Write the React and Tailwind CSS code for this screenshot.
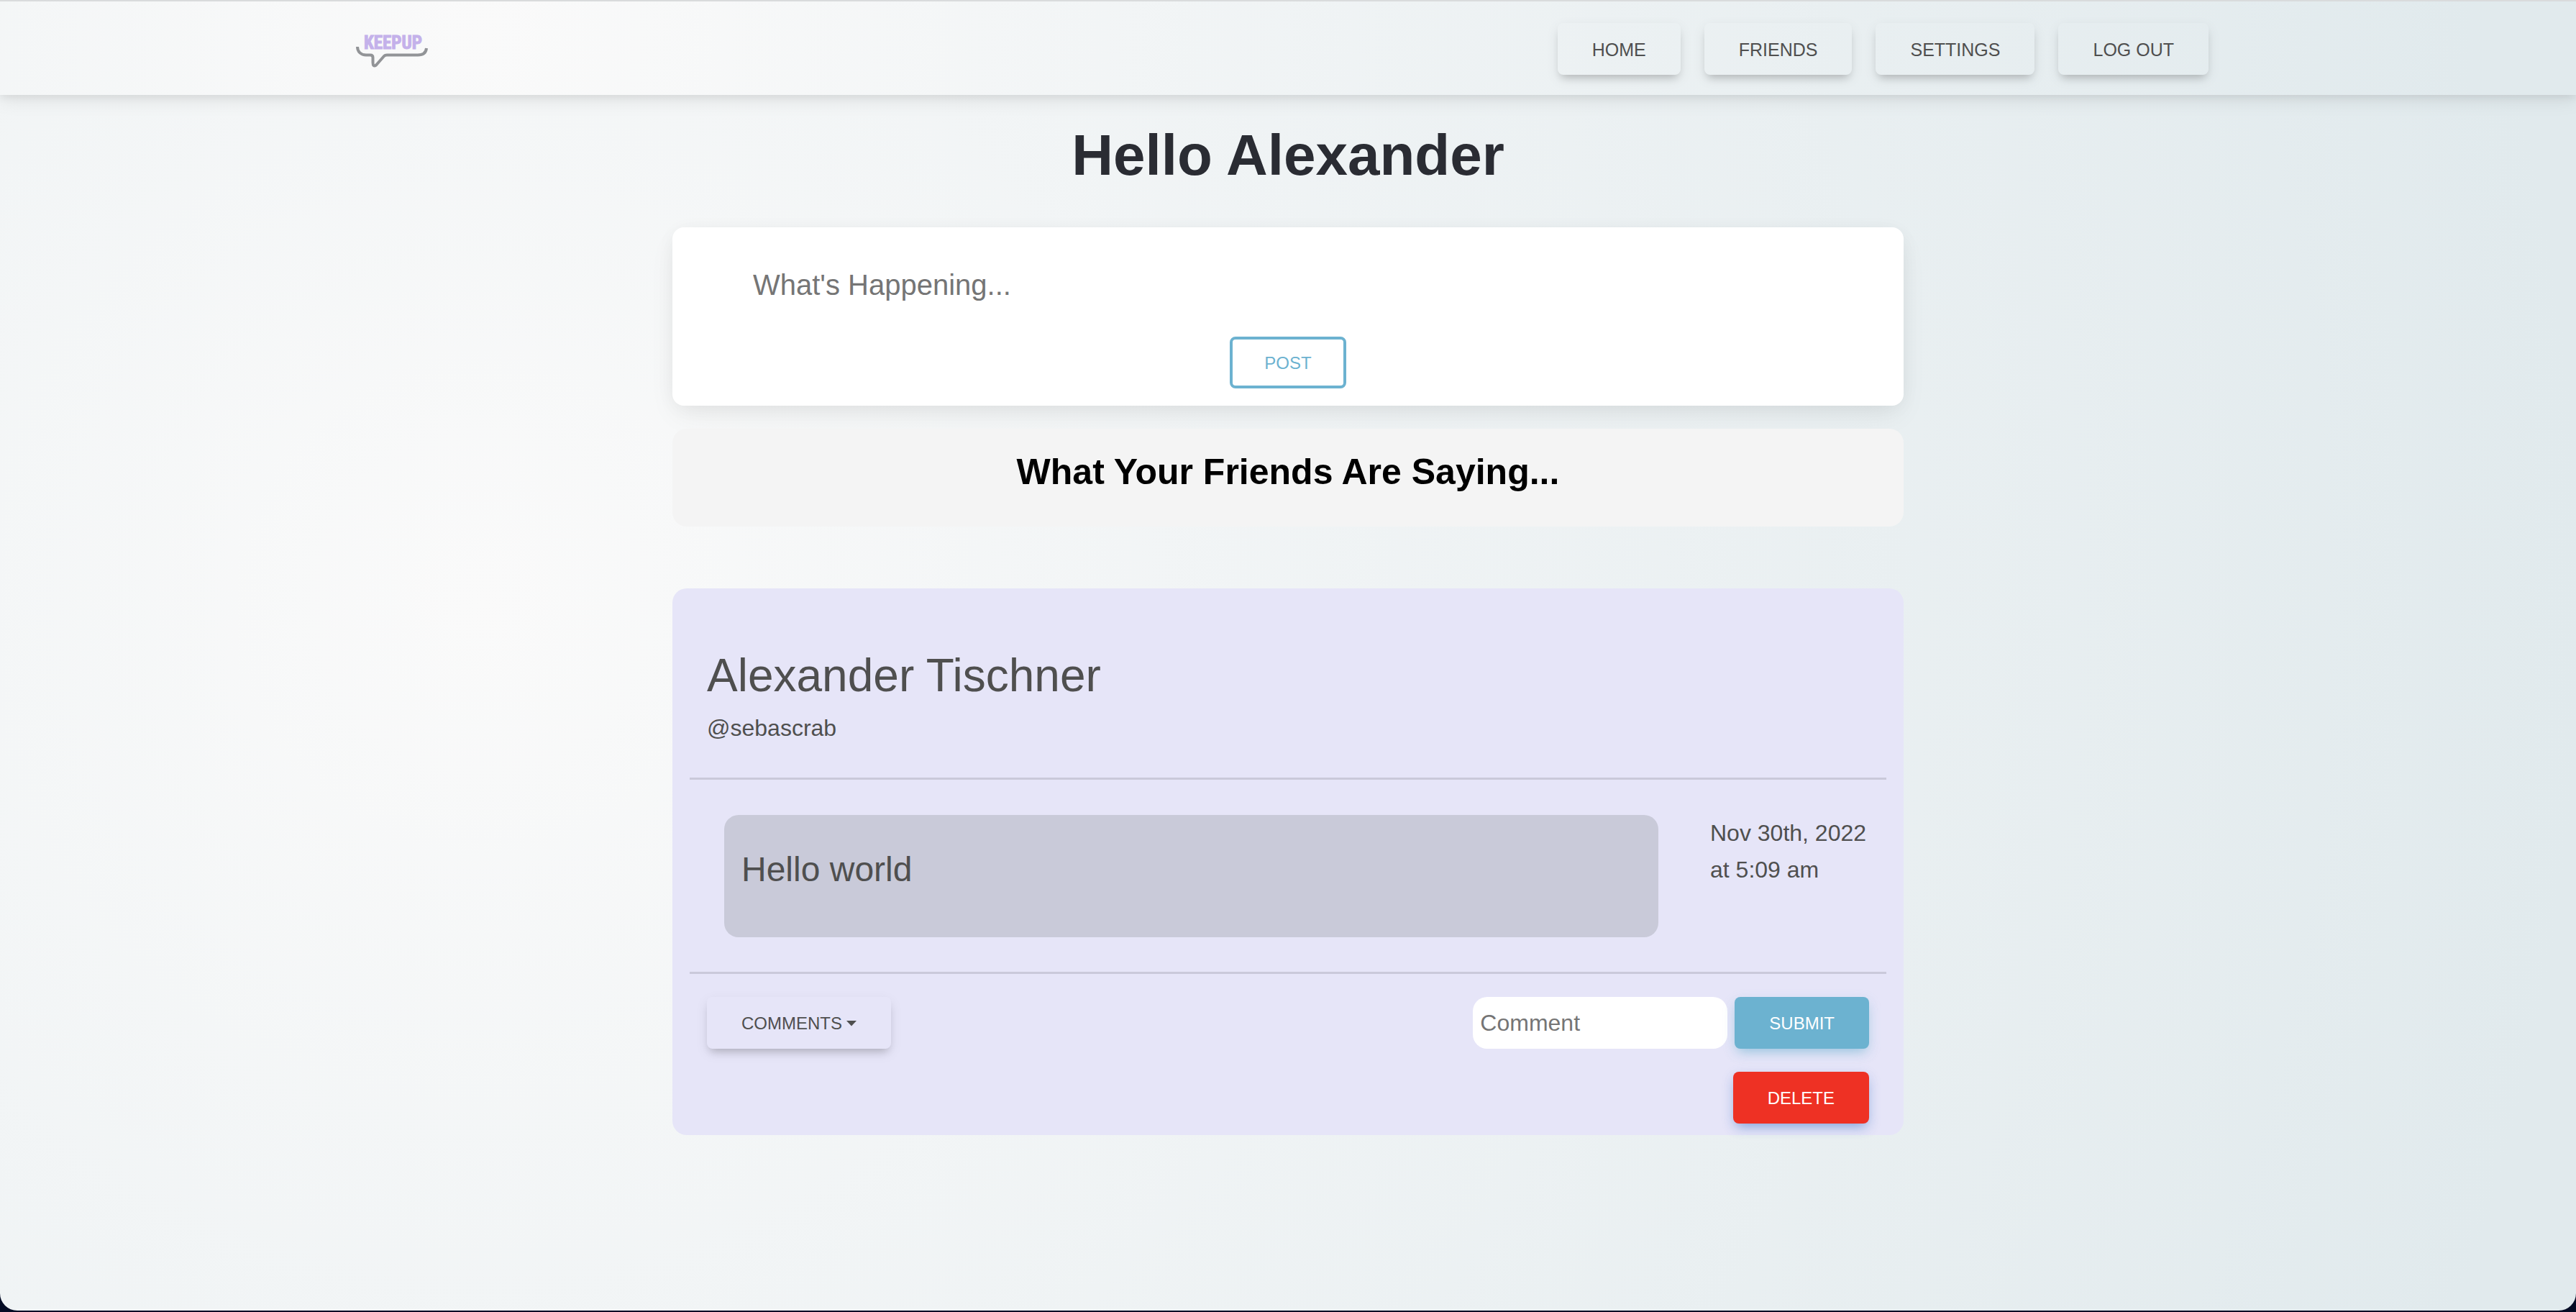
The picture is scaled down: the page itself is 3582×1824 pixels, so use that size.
const BTN =
  "h-[72px] rounded-lg px-12 text-center uppercase leading-none whitespace-nowrap";
const SOFT_SHADOW =
  "shadow-[0_8px_12px_-5px_rgba(0,0,0,0.2),0_6px_18px_rgba(0,0,0,0.08)]";

const links = ["Home", "Friends", "Settings", "Log out"];

function Logo() {
  return (
    <svg width="100" height="52" viewBox="0 0 100 52" role="img" aria-label="KeepUp" className="block">
      <text
        x="51.5"
        y="26"
        textAnchor="middle"
        fontSize="25"
        fontWeight="700"
        fill="#c4b1ea"
        stroke="#c4b1ea"
        strokeWidth="1"
        className="font-['Liberation_Sans_Narrow','Roboto_Condensed','Liberation_Sans',sans-serif]"
      >
        KEEPUP
      </text>
      <path
        d="M2 23 C2 30 7 34.500 14 34.500 H20 Q23.500 34.500 23.500 38 V45 Q23.500 51.500 28 48.500 L39 36 Q40.500 34.500 43 34.500 H86 Q97 34.500 98 25"
        fill="none"
        stroke="#929497"
        strokeWidth="4"
      />
    </svg>
  );
}

function Navbar() {
  return (
    <header className="border-t-2 border-[#d9dbdc] bg-[radial-gradient(circle_at_18.7%_38%,rgb(250,250,250)_0%,rgb(225,234,237)_95%)] pt-[30px] pb-7 shadow-[0_8px_24px_rgba(0,0,0,0.08),0_4px_10px_rgba(0,0,0,0.06)]">
      <div className="mx-auto flex max-w-[2640px] items-center justify-between px-6">
        <a href="#home">
          <Logo />
        </a>
        <nav className="mr-4 flex gap-[33px]">
          {links.map((label) => (
            <button key={label} type="button" className={`${BTN} ${SOFT_SHADOW} pt-0.5 text-[25px]`}>
              {label}
            </button>
          ))}
        </nav>
      </div>
    </header>
  );
}

function Composer() {
  return (
    <form className="flex flex-col items-center rounded-2xl bg-white px-28 pt-12 pb-6 shadow-[0_4px_30px_-6px_rgba(0,0,0,0.07),0_16px_40px_-4px_rgba(0,0,0,0.06)]">
      <input
        type="text"
        aria-label="What's happening"
        placeholder="What's Happening..."
        className="h-16 w-full bg-transparent text-[40px] outline-none placeholder:text-[#757575]"
      />
      <button
        type="button"
        className="mt-10 h-[72px] rounded-lg border-4 border-[#6cb2d0] px-11 pt-0.5 text-2xl leading-none text-[#6cb2d0] uppercase"
      >
        Post
      </button>
    </form>
  );
}

function Post() {
  return (
    <article className="mt-[86px] rounded-[20px] bg-[#e6e5f8] px-6 pt-[81px] pb-4">
      <header className="px-6">
        <h3 className="text-[64px] leading-[80px]">Alexander Tischner</h3>
        <p className="mt-2 text-[32px] leading-[51px]">@sebascrab</p>
      </header>
      <hr className="mt-[43px] border-t-[3px] border-[#cac9da]" />
      <div className="flex items-start gap-[72px] pt-[49px] pb-12 pr-[22px] pl-12">
        <p className="flex-1 rounded-[20px] bg-[#c9cad9] px-6 pt-[37px] pb-14 text-5xl leading-[77px]">
          Hello world
        </p>
        <p className="w-[223px] text-[32px] leading-[51px] whitespace-nowrap">
          Nov 30th, 2022
          <br />
          at 5:09 am
        </p>
      </div>
      <hr className="border-t-[3px] border-[#cac9da]" />
      <div className="flex items-start justify-between px-6 pt-8">
        <button
          type="button"
          className={`${BTN} ${SOFT_SHADOW} flex items-center gap-1.5 pt-0.5 text-2xl`}
        >
          Comments
          <svg width="14" height="8" viewBox="0 0 14 8" fill="currentColor" aria-hidden="true">
            <path d="M0 0H14L7 7.500Z" />
          </svg>
        </button>
        <div className="flex flex-col items-end gap-8">
          <form className="flex gap-2.5">
            <input
              type="text"
              aria-label="Comment"
              placeholder="Comment"
              className="h-[72px] w-[354px] rounded-[20px] bg-white px-2.5 text-[32px] outline-none placeholder:text-[#757575]"
            />
            <button
              type="button"
              className={`${BTN} bg-[#6cb2d0] pt-0.5 text-2xl text-white shadow-[0_8px_16px_-6px_rgba(108,178,208,0.6),0_6px_18px_rgba(108,178,208,0.2)]`}
            >
              Submit
            </button>
          </form>
          <button
            type="button"
            className={`${BTN} bg-[#ee3124] pt-0.5 text-2xl text-white shadow-[0_8px_16px_-6px_rgba(59,113,202,0.5),0_6px_18px_rgba(59,113,202,0.2)]`}
          >
            Delete
          </button>
        </div>
      </div>
    </article>
  );
}

export default function App() {
  return (
    <div className="flex min-h-screen flex-col bg-[#050c25] pb-0.5 font-['Liberation_Sans',Arial,sans-serif] text-[#4f4f4f]">
      <div className="flex-1 rounded-b-3xl bg-[radial-gradient(circle_at_18.7%_46%,rgb(250,250,250)_0%,rgb(225,234,237)_95%)]">
        <Navbar />
        <main className="mx-auto max-w-[1712px]">
          <h1 className="pt-[34px] pb-[50px] text-center text-[80px] leading-[100px] font-bold text-[#2a2c33]">
            Hello Alexander
          </h1>
          <Composer />
          <h2 className="mt-8 rounded-[20px] bg-[#f4f4f4] pt-[30px] pb-[46px] text-center text-[50px] leading-[60px] font-bold text-black">
            What Your Friends Are Saying...
          </h2>
          <Post />
        </main>
      </div>
    </div>
  );
}
